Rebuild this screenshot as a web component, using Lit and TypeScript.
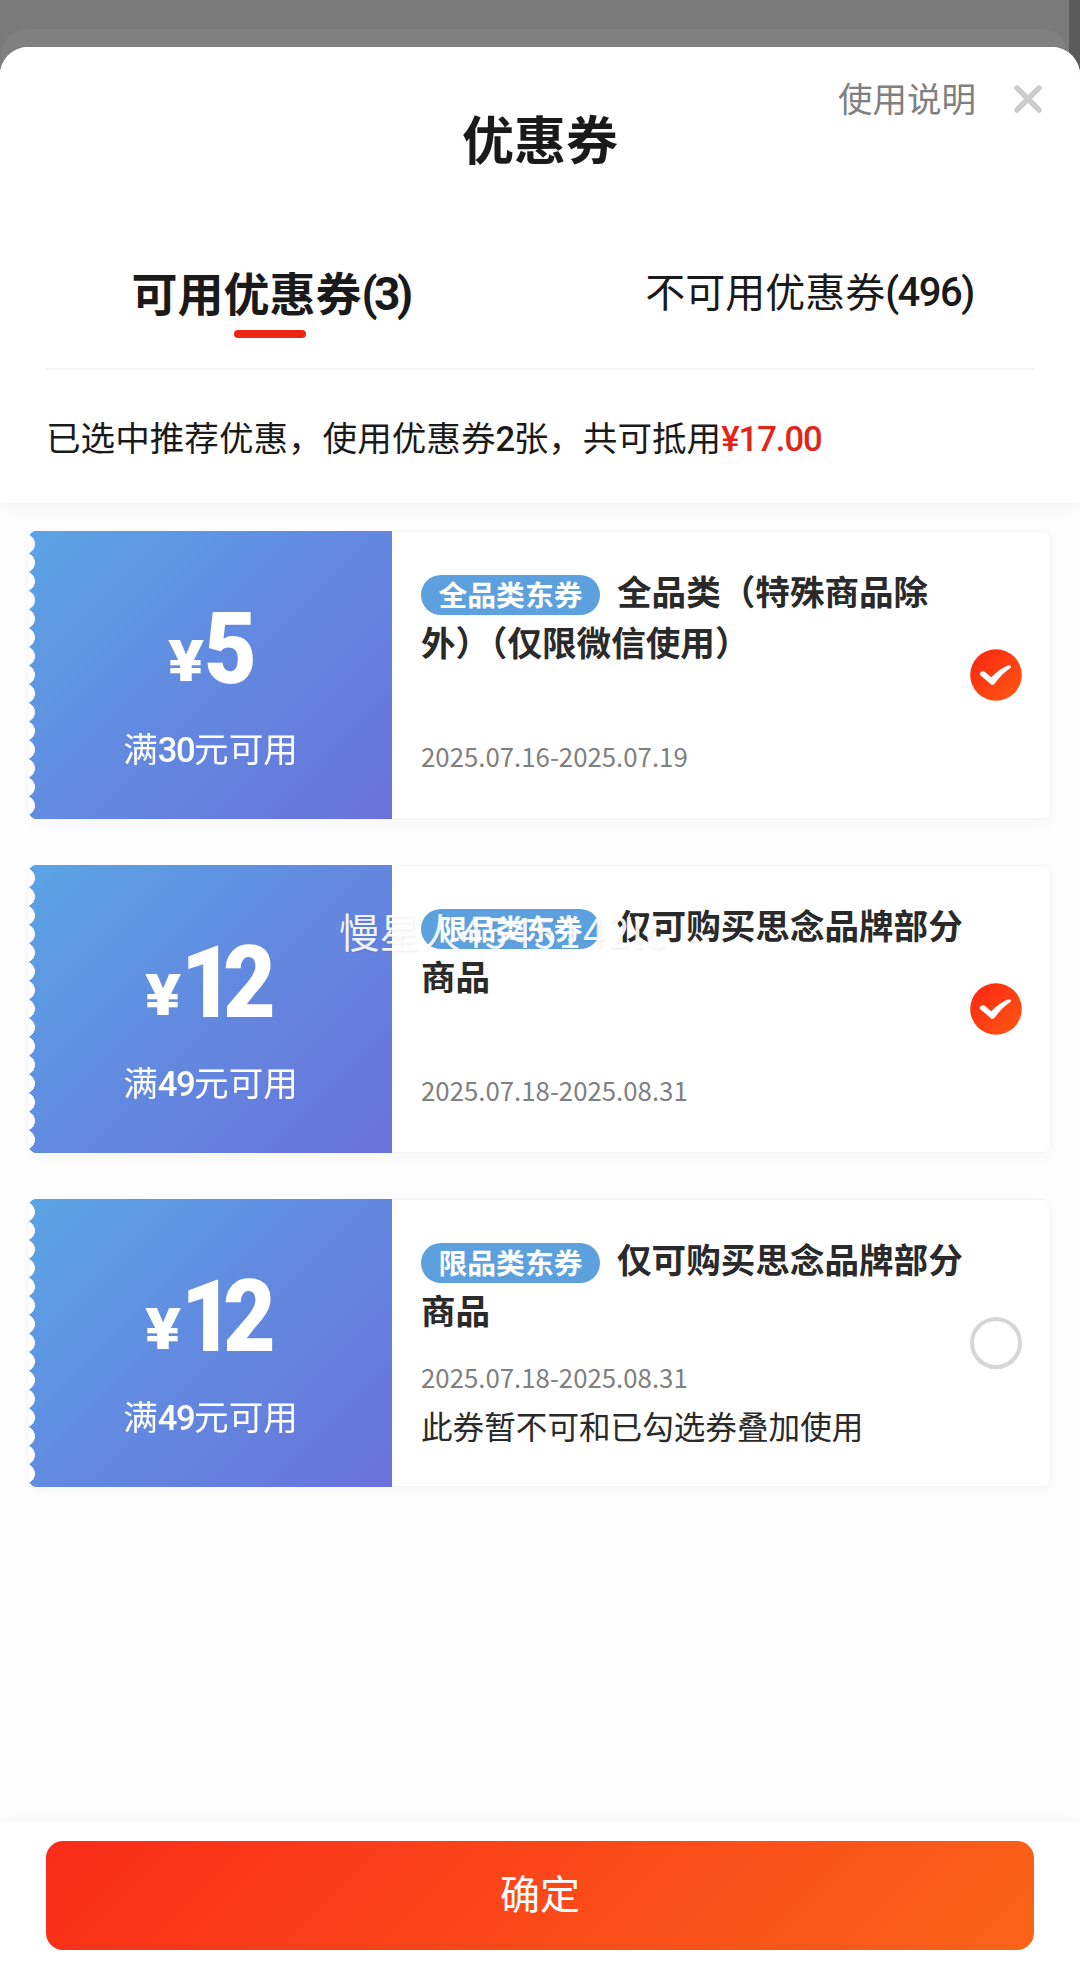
import { LitElement, css, html, nothing } from "lit";
import { customElement, property } from "lit/decorators.js";
import { classMap } from "lit/directives/class-map.js";

interface Coupon {
  amount: string;
  limit: string;
  tag: string;
  title: string;
  period: string;
  note?: string;
  checked: boolean;
}

const coupons: Coupon[] = [
  {
    amount: "5",
    limit: "30",
    tag: "全品类东券",
    title: "全品类（特殊商品除外）（仅限微信使用）",
    period: "2025.07.16-2025.07.19",
    checked: true,
  },
  {
    amount: "12",
    limit: "49",
    tag: "限品类东券",
    title: "仅可购买思念品牌部分商品",
    period: "2025.07.18-2025.08.31",
    checked: true,
  },
  {
    amount: "12",
    limit: "49",
    tag: "限品类东券",
    title: "仅可购买思念品牌部分商品",
    period: "2025.07.18-2025.08.31",
    note: "此券暂不可和已勾选券叠加使用",
    checked: false,
  },
];

@customElement("coupon-check")
export class CouponCheck extends LitElement {
  @property({ type: Boolean })
  checked = false;

  render() {
    if (!this.checked) {
      return html`<div class="ring"></div>`;
    }
    return html`
      <svg viewBox="0 0 52 52">
        <defs>
          <linearGradient id="fill" x1="0" y1="0" x2="1" y2="1">
            <stop offset="0" stop-color="#fa2412" />
            <stop offset="1" stop-color="#ff5a12" />
          </linearGradient>
        </defs>
        <circle cx="26" cy="26" r="25.8" fill="url(#fill)" />
        <path
          d="M10.5 23.2Q13 21.2 15.6 23.4L21.2 28.2Q29 20 38.5 16.2Q41.6 15.8 40.8 18.8Q31.5 25 25 34.3Q22.3 37.6 19.6 34.3Q15 30 10.5 26.6Q8.9 25 10.5 23.2z"
          fill="#fff"
        />
      </svg>
    `;
  }

  static styles = css`
    :host {
      display: block;
      width: 52px;
      height: 52px;
    }

    svg {
      display: block;
    }

    .ring {
      box-sizing: border-box;
      width: 52px;
      height: 52px;
      border: 4px solid #d6d6d6;
      border-radius: 50%;
    }
  `;
}

@customElement("coupon-card")
export class CouponCard extends LitElement {
  @property({ attribute: false })
  coupon!: Coupon;

  render() {
    const { amount, limit, tag, title, period, note, checked } = this.coupon;
    return html`
      <div class="value">
        <div class="price">
          <span class="yen">¥</span><span class="amount">${amount}</span>
        </div>
        <div class="limit">满<span class="num">${limit}</span>元可用</div>
      </div>
      <div class="info">
        <div class="text">
          <div class="title"><span class="tag">${tag}</span>${title}</div>
          <div class=${classMap({ period: true, raised: !!note })}>
            ${period}
          </div>
          ${note ? html`<div class="note">${note}</div>` : nothing}
        </div>
        <coupon-check ?checked=${checked}></coupon-check>
      </div>
    `;
  }

  static styles = css`
    :host {
      display: flex;
      height: 288px;
      border-radius: 8px;
      box-shadow: 0 4px 14px rgba(0, 0, 0, 0.04);
    }

    .value {
      box-sizing: border-box;
      flex: none;
      width: 363px;
      padding-top: 65px;
      border-radius: 6px 0 0 6px;
      background: linear-gradient(135deg, #5ba4e4, #6289e0 50%, #6a72da);
      color: #fff;
      text-align: center;
      -webkit-mask: radial-gradient(
          circle at -4px 50%,
          transparent 9.6px,
          #000 10.2px
        )
        0 3.65px / 100% 18.7px repeat-y;
    }

    .price {
      display: flex;
      align-items: baseline;
      justify-content: center;
      height: 106px;
      padding-right: 2px;
      font: 900 101px/106px Roboto, sans-serif;
    }

    .yen {
      margin-right: 5px;
      font-size: 58px;
      transform: translateY(-2px) scaleX(1.15);
      transform-origin: left;
    }

    .amount {
      letter-spacing: -12px;
      transform: scaleX(0.9);
      transform-origin: left;
    }

    .limit {
      margin-top: 20px;
      font-size: 34.6px;
      line-height: 50px;
    }

    .num {
      font-family: Roboto, sans-serif;
      font-weight: 500;
      letter-spacing: -1.5px;
    }

    .info {
      box-sizing: border-box;
      display: flex;
      flex: 1;
      align-items: center;
      justify-content: space-between;
      padding: 0 28px 0 29px;
      border: 1px solid #f5f5f5;
      border-left: none;
      border-radius: 0 8px 8px 0;
      background: #fff;
    }

    .text {
      width: 545px;
      height: 100%;
      white-space: nowrap;
    }

    .title {
      height: 102px;
      padding-top: 33px;
      color: #2a2a2a;
      font-size: 34.6px;
      font-weight: 700;
      line-height: 51px;
      white-space: normal;
      word-break: break-all;
    }

    .tag {
      display: inline-block;
      width: 179px;
      height: 40px;
      margin-right: 17px;
      border-radius: 20px;
      background: #5ca1dd;
      color: #fff;
      font-size: 28.8px;
      line-height: 37px;
      text-align: center;
      vertical-align: -1px;
    }

    .period {
      margin-top: 69px;
      color: #808080;
      font-size: 25.8px;
      line-height: 40px;
    }

    .period.raised {
      margin-top: 22px;
    }

    .note {
      margin-top: 4px;
      color: #2a2a2a;
      font-size: 31.6px;
      line-height: 48px;
    }
  `;
}

@customElement("app-root")
export class AppRoot extends LitElement {
  render() {
    return html`
      <div class="backdrop"><div class="below"></div></div>
      <div class="sheet">
        <header>
          <div class="actions">
            <span>使用说明</span>
            <svg width="28" height="28" viewBox="0 0 28 28">
              <path
                d="M3 3l22 22M25 3L3 25"
                stroke="#ccc"
                stroke-width="5.5"
                stroke-linecap="round"
              />
            </svg>
          </div>
          <h1>优惠券</h1>
          <nav>
            <div class="tab active">可用优惠券<span class="num">(3)</span></div>
            <div class="tab">不可用优惠券<span class="num">(496)</span></div>
          </nav>
          <div class="summary">
            已选中推荐优惠，使用优惠券<span class="num">2</span>张，共可抵用<span
              class="num total"
              >¥17.00</span
            >
          </div>
        </header>
        <main>
          ${coupons.map(
            (coupon) => html`<coupon-card .coupon=${coupon}></coupon-card>`
          )}
        </main>
        <footer><button>确定</button></footer>
      </div>
      <div class="watermark">慢星人<span>4545142lc</span></div>
    `;
  }

  static styles = css`
    :host {
      display: block;
      position: relative;
      height: 1967px;
      overflow: hidden;
      background: linear-gradient(to right, #7a7a7a 1069px, #5c5c5c 1069px);
      font-family: "Noto Sans CJK SC", sans-serif;
    }

    .backdrop {
      box-sizing: border-box;
      height: 47px;
      margin-right: 11px;
      padding-top: 29px;
    }

    .below {
      height: 50px;
      border-radius: 28px 28px 0 0;
      background: #808080;
    }

    .sheet {
      position: relative;
      display: flex;
      flex-direction: column;
      height: 1920px;
      border-radius: 28px 28px 0 0;
      background: #fefefe;
    }

    header {
      box-sizing: border-box;
      height: 456px;
      border-radius: 28px 28px 0 0;
      background: #fff;
      box-shadow: 0 4px 18px rgba(0, 0, 0, 0.06);
      clip-path: inset(0 0 -30px);
      color: #1a1a1a;
    }

    .actions {
      display: flex;
      align-items: center;
      justify-content: flex-end;
      gap: 38px;
      height: 50px;
      padding: 27px 38px 0 0;
      color: #808080;
      font-size: 34.5px;
      line-height: 50px;
    }

    .actions span {
      padding-bottom: 5px;
    }

    h1 {
      margin: -21px 0 0;
      font-size: 52px;
      font-weight: 700;
      line-height: 70px;
      text-align: center;
    }

    nav {
      display: flex;
      height: 145px;
      margin: 50px 46px 0;
      border-bottom: 2px solid #f4f4f4;
    }

    .tab {
      display: flex;
      flex: 1;
      justify-content: center;
      padding-top: 39px;
      padding-left: 36px;
      font-size: 40px;
      line-height: 56px;
      white-space: nowrap;
    }

    .active {
      position: relative;
      padding-top: 40px;
      padding-right: 54px;
      padding-left: 0;
      font-size: 46px;
      font-weight: 700;
    }

    .active::after {
      position: absolute;
      bottom: 30px;
      left: 188px;
      width: 72px;
      height: 8px;
      border-radius: 4px;
      background: #ec2612;
      content: "";
    }

    .num {
      font-family: Roboto, sans-serif;
      font-weight: 500;
      letter-spacing: -1.5px;
    }

    .tab .num {
      padding-top: 3px;
    }

    .active .num {
      font-weight: 700;
      letter-spacing: -3.5px;
    }

    .summary {
      padding: 41px 46px 0;
      font-size: 34.6px;
      line-height: 50px;
    }

    .total {
      color: #e1251b;
      letter-spacing: -1px;
    }

    main {
      display: flex;
      flex: 1;
      flex-direction: column;
      gap: 46px;
      padding: 28px 29px 0;
    }

    footer {
      box-sizing: border-box;
      height: 145px;
      padding: 19px 46px 0;
      background: #fff;
      box-shadow: 0 -2px 14px rgba(0, 0, 0, 0.03);
    }

    button {
      display: block;
      width: 100%;
      height: 109px;
      padding: 0 0 7px;
      border: none;
      border-radius: 17px;
      background: linear-gradient(135deg, #fa2c19, #fa6419);
      color: #fff;
      font-family: inherit;
      font-size: 40px;
      line-height: 100px;
    }

    .watermark {
      position: absolute;
      top: 903px;
      left: 339px;
      color: rgba(255, 255, 255, 0.92);
      font-size: 40.5px;
      line-height: 56px;
      text-shadow: 1px 1px 2px rgba(0, 0, 0, 0.08);
      white-space: nowrap;
    }

    .watermark span {
      letter-spacing: 2px;
    }
  `;
}

declare global {
  interface HTMLElementTagNameMap {
    "app-root": AppRoot;
    "coupon-card": CouponCard;
    "coupon-check": CouponCheck;
  }
}
